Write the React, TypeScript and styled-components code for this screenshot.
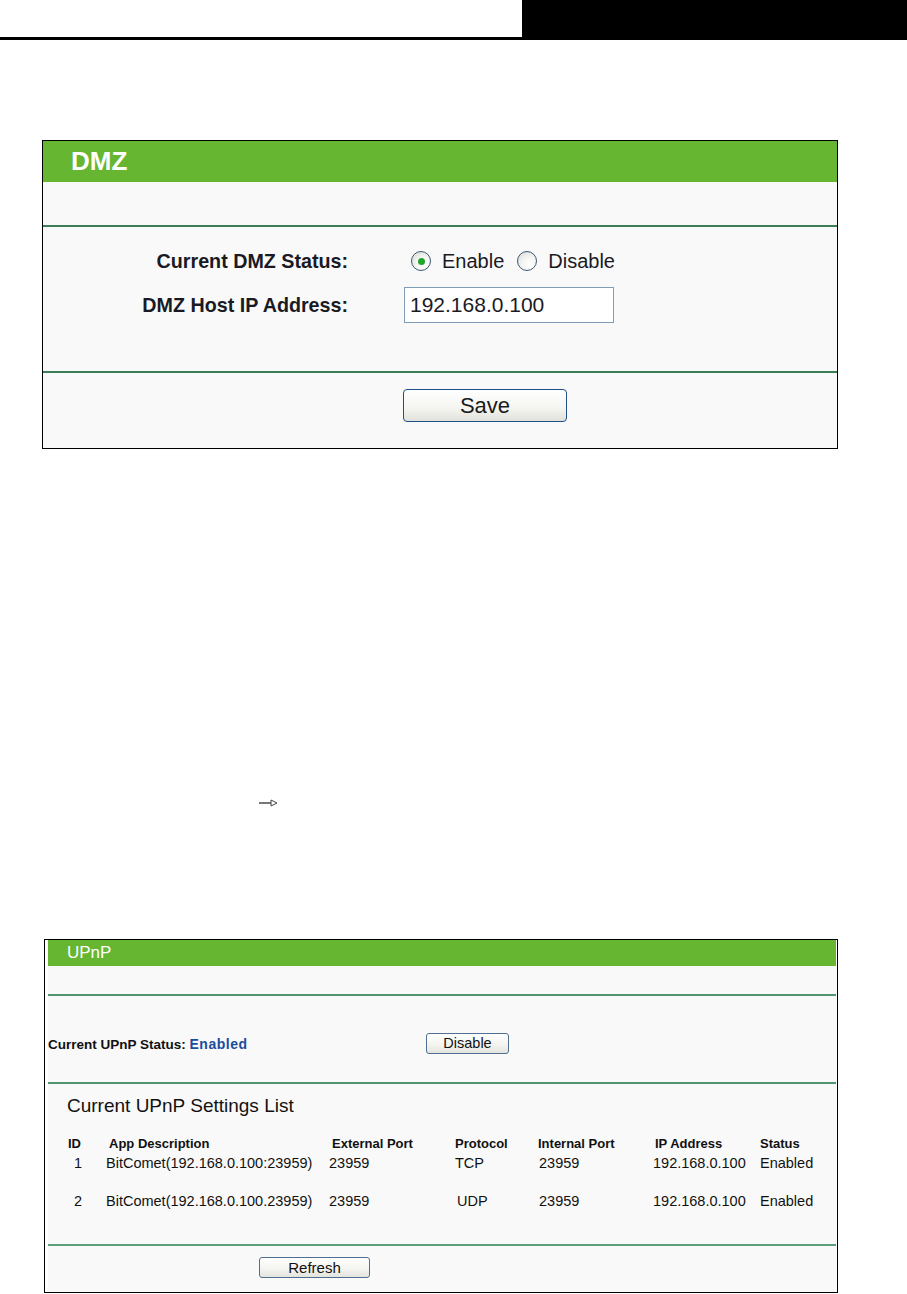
import styled, { createGlobalStyle } from "styled-components";

const GlobalStyle = createGlobalStyle`
  html, body {
    margin: 0;
    padding: 0;
    background: #fff;
  }
  body {
    font-family: "Liberation Sans", Arial, sans-serif;
    color: #1a1a1a;
  }
`;

const upnpRows = [
  { id: "1", desc: "BitComet(192.168.0.100:23959)", ext: "23959", proto: "TCP", int: "23959", ip: "192.168.0.100", status: "Enabled" },
  { id: "2", desc: "BitComet(192.168.0.100.23959)", ext: "23959", proto: "UDP", int: "23959", ip: "192.168.0.100", status: "Enabled" },
];

const columns = [
  { label: "ID", width: 41 },
  { label: "App Description", width: 223 },
  { label: "External Port", width: 123 },
  { label: "Protocol", width: 83 },
  { label: "Internal Port", width: 117 },
  { label: "IP Address", width: 105 },
  { label: "Status", width: 75 },
];

const App = () => {
  return (
    <Page>
      <GlobalStyle />
      <TopBar>
        <TopRule />
        <TopBlock />
      </TopBar>

      <DmzPanel>
        <DmzTitle>DMZ</DmzTitle>
        <DmzSpacer />
        <DmzForm>
          <FieldLabel>Current DMZ Status:</FieldLabel>
          <RadioGroup>
            <RadioOption>
              <Radio $checked />
              Enable
            </RadioOption>
            <RadioOption>
              <Radio />
              Disable
            </RadioOption>
          </RadioGroup>
          <FieldLabel>DMZ Host IP Address:</FieldLabel>
          <IpInput defaultValue="192.168.0.100" />
        </DmzForm>
        <DmzFooter>
          <SaveButton>Save</SaveButton>
        </DmzFooter>
      </DmzPanel>

      <Gap>
        <svg width="19" height="8" viewBox="0 0 19 8">
          <line x1="0" y1="4" x2="12" y2="4" stroke="#555" strokeWidth="1.6" />
          <path d="M12 1 L18 4 L12 7 Z" fill="#fff" stroke="#444" strokeWidth="1" />
        </svg>
      </Gap>

      <UpnpPanel>
        <UpnpInner>
          <UpnpTitle>UPnP</UpnpTitle>
          <UpnpSpacer />
          <StatusRow>
            <StatusText>
              Current UPnP Status: <StatusValue>Enabled</StatusValue>
            </StatusText>
            <SmallButton $width={83}>Disable</SmallButton>
          </StatusRow>
          <ListSection>
            <ListTitle>Current UPnP Settings List</ListTitle>
            <Table>
              <colgroup>
                {columns.map((c) => (
                  <col key={c.label} style={{ width: c.width }} />
                ))}
              </colgroup>
              <thead>
                <tr>
                  {columns.map((c) => (
                    <HeadCell key={c.label}>{c.label}</HeadCell>
                  ))}
                </tr>
              </thead>
              <tbody>
                {upnpRows.map((r, i) => (
                  <tr key={r.id}>
                    <Cell $top={i === 0 ? 0 : 18} $indent={6}>{r.id}</Cell>
                    <Cell $top={i === 0 ? 0 : 18} $indent={-3}>{r.desc}</Cell>
                    <Cell $top={i === 0 ? 0 : 18} $indent={-3}>{r.ext}</Cell>
                    <Cell $top={i === 0 ? 0 : 18} $indent={i === 0 ? 0 : 2}>{r.proto}</Cell>
                    <Cell $top={i === 0 ? 0 : 18} $indent={1}>{r.int}</Cell>
                    <Cell $top={i === 0 ? 0 : 18} $indent={-2}>{r.ip}</Cell>
                    <Cell $top={i === 0 ? 0 : 18}>{r.status}</Cell>
                  </tr>
                ))}
              </tbody>
            </Table>
          </ListSection>
          <UpnpFooter>
            <SmallButton $width={111} $size={15}>Refresh</SmallButton>
          </UpnpFooter>
        </UpnpInner>
      </UpnpPanel>
    </Page>
  );
};

const Page = styled.div`
  width: 907px;
  min-height: 1294px;
`;

const TopBar = styled.div`
  display: flex;
  height: 40px;
`;

const TopRule = styled.div`
  width: 522px;
  border-bottom: 3px solid #000;
  box-sizing: border-box;
`;

const TopBlock = styled.div`
  flex: 1;
  background: #000;
`;

const DmzPanel = styled.div`
  margin: 100px 0 0 42px;
  width: 796px;
  border: 1px solid #000;
  background: #f9f9f9;
  box-sizing: border-box;
`;

const DmzTitle = styled.div`
  height: 41px;
  line-height: 40px;
  padding-left: 28px;
  background: #66b632;
  color: #fff;
  font-size: 26px;
  font-weight: bold;
`;

const DmzSpacer = styled.div`
  height: 43px;
  border-bottom: 2px solid #3a7d58;
`;

const DmzForm = styled.div`
  display: grid;
  grid-template-columns: 305px 1fr;
  grid-auto-rows: 36px;
  column-gap: 56px;
  row-gap: 8px;
  align-items: center;
  height: 146px;
  padding-top: 16px;
  box-sizing: border-box;
  border-bottom: 2px solid #3a7d58;
`;

const FieldLabel = styled.div`
  text-align: right;
  font-size: 19.7px;
  font-weight: bold;
  color: #1a1a24;
`;

const RadioGroup = styled.div`
  display: flex;
  align-items: center;
  gap: 13px;
  padding-left: 7px;
`;

const RadioOption = styled.label`
  display: flex;
  align-items: center;
  gap: 11px;
  font-size: 20px;
  color: #1a1a24;
`;

const Radio = styled.span<{ $checked?: boolean }>`
  position: relative;
  width: 20px;
  height: 20px;
  border-radius: 50%;
  border: 1.5px solid #3d5873;
  box-sizing: border-box;
  background: radial-gradient(circle at 65% 70%, #ffffff 0%, #f4f4f2 45%, #d6d6d0 100%);

  &::after {
    content: "";
    display: ${(p) => (p.$checked ? "block" : "none")};
    position: absolute;
    left: 50%;
    top: 50%;
    width: 7px;
    height: 7px;
    margin: -3.5px 0 0 -3.5px;
    border-radius: 50%;
    background: #22a52b;
  }
`;

const IpInput = styled.input`
  width: 210px;
  height: 36px;
  box-sizing: border-box;
  border: 1px solid #7f9db9;
  background: #fff;
  padding: 0 0 0 5px;
  font-family: "Liberation Sans", Arial, sans-serif;
  font-size: 21px;
  color: #1a1a24;
  outline: none;
`;

const DmzFooter = styled.div`
  height: 75px;
  padding: 16px 0 0 360px;
  box-sizing: border-box;
`;

const SaveButton = styled.button`
  width: 164px;
  height: 33px;
  border: 1.5px solid #1f4f86;
  border-radius: 4px;
  background: linear-gradient(#ffffff, #f4f4f0 60%, #e2e2dc);
  font-family: "Liberation Sans", Arial, sans-serif;
  font-size: 22px;
  color: #1a1a1a;
  padding: 0;
`;

const Gap = styled.div`
  height: 490px;
  padding: 350px 0 0 259px;
  box-sizing: border-box;
  line-height: 0;
`;

const UpnpPanel = styled.div`
  margin-left: 44px;
  width: 794px;
  height: 354px;
  border: 1px solid #000;
  padding: 0 1px 0 3px;
  background: #fff;
  box-sizing: border-box;
`;

const UpnpInner = styled.div`
  background: #f9f9f9;
  height: 100%;
`;

const UpnpTitle = styled.div`
  height: 26px;
  line-height: 26px;
  padding-left: 19px;
  background: #66b632;
  color: #fff;
  font-size: 17px;
`;

const UpnpSpacer = styled.div`
  height: 28px;
  border-bottom: 2px solid #4f9670;
`;

const StatusRow = styled.div`
  display: grid;
  grid-template-columns: 378px auto;
  align-items: center;
  height: 88px;
  padding-top: 9px;
  box-sizing: border-box;
  border-bottom: 2px solid #4f9670;
`;

const StatusText = styled.div`
  font-size: 13.5px;
  font-weight: bold;
  color: #111;
`;

const StatusValue = styled.span`
  color: #1c4c9c;
  font-size: 14px;
  letter-spacing: 0.5px;
`;

const SmallButton = styled.button<{ $width: number; $size?: number }>`
  width: ${(p) => p.$width}px;
  height: 21px;
  border: 1px solid #4f6f92;
  border-radius: 3px;
  background: linear-gradient(#ffffff, #f3f3ef 60%, #e4e4de);
  font-family: "Liberation Sans", Arial, sans-serif;
  font-size: ${(p) => p.$size ?? 14.5}px;
  color: #111;
  padding: 0;
  line-height: 19px;
`;

const ListSection = styled.div`
  height: 162px;
  padding-top: 11px;
  box-sizing: border-box;
  border-bottom: 2px solid #5ca07b;
`;

const ListTitle = styled.div`
  padding-left: 19px;
  height: 22px;
  line-height: 22px;
  font-size: 19px;
  color: #111;
`;

const Table = styled.table`
  margin: 16px 0 0 20px;
  border-collapse: collapse;
  table-layout: fixed;
`;

const HeadCell = styled.th`
  height: 20px;
  padding: 0;
  text-align: left;
  font-size: 13px;
  font-weight: bold;
  color: #111;
  white-space: nowrap;
`;

const Cell = styled.td<{ $top: number; $indent?: number }>`
  padding: ${(p) => p.$top}px 0 0 0;
  height: 20px;
  line-height: 20px;
  text-indent: ${(p) => p.$indent ?? 0}px;
  font-size: 14.5px;
  color: #111;
  white-space: nowrap;
`;

const UpnpFooter = styled.div`
  padding: 11px 0 0 211px;
`;

export default App;
